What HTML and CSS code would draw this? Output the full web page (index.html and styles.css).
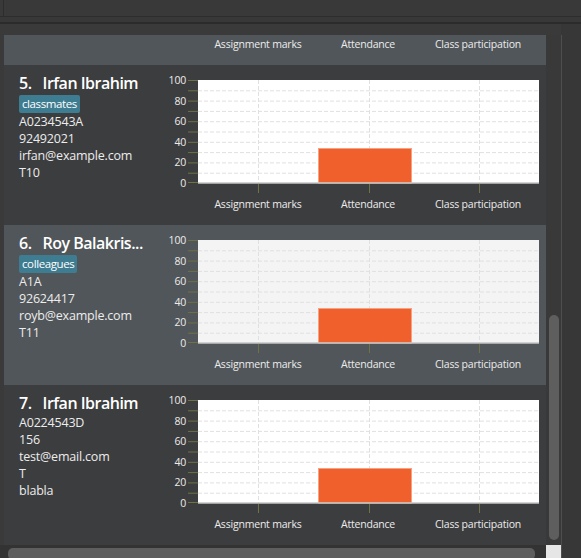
FILE: index.html
```html
<!DOCTYPE html>
<html>
<head>
<meta charset="utf-8">
<link rel="stylesheet" href="styles.css">
</head>
<body>
<div class="topbar"><div class="field"></div></div>
<div class="divider"></div>
<div class="main">
  <div class="listpane">
    <div class="viewport-row">
      <div class="viewport">
        <div class="card alt partial">
          <div class="xlabels"><span>Assignment marks</span><span>Attendance</span><span>Class participation</span></div>
        </div>

        <div class="card">
          <div class="info">
            <div class="name"><span class="idx">5.</span><span class="nm">Irfan Ibrahim</span></div>
            <span class="tag">classmates</span>
            <div class="details">
              <div>A0234543A</div><div>92492021</div><div>irfan@example.com</div><div>T10</div>
            </div>
          </div>
          <div class="chart">
            <div class="yaxis"><span>100</span><span>80</span><span>60</span><span>40</span><span>20</span><span>0</span></div>
            <svg class="plot" width="351" height="113" viewBox="0 0 351 113">
              <rect class="plotbg" x="10" y="0" width="341" height="103"/>
              <g class="grid">
                <line x1="10" x2="351" y1="10.8" y2="10.8"/><line x1="10" x2="351" y1="21.1" y2="21.1"/><line x1="10" x2="351" y1="31.4" y2="31.4"/><line x1="10" x2="351" y1="41.7" y2="41.7"/><line x1="10" x2="351" y1="52" y2="52"/><line x1="10" x2="351" y1="62.3" y2="62.3"/><line x1="10" x2="351" y1="72.6" y2="72.6"/><line x1="10" x2="351" y1="82.9" y2="82.9"/><line x1="10" x2="351" y1="93.2" y2="93.2"/>
                <line x1="70.5" x2="70.5" y1="0" y2="103"/><line x1="181.5" x2="181.5" y1="0" y2="103"/><line x1="291.5" x2="291.5" y1="0" y2="103"/>
              </g>
              <rect class="bar" x="130.5" y="68.5" width="93" height="34.5"/>
              <line class="axis" x1="10" x2="351" y1="103" y2="103"/>
              <g class="ticks">
                <line x1="0" x2="10" y1="0.5" y2="0.5"/><line x1="0" x2="10" y1="10.8" y2="10.8"/><line x1="0" x2="10" y1="21.1" y2="21.1"/><line x1="0" x2="10" y1="31.4" y2="31.4"/><line x1="0" x2="10" y1="41.7" y2="41.7"/><line x1="0" x2="10" y1="52" y2="52"/><line x1="0" x2="10" y1="62.3" y2="62.3"/><line x1="0" x2="10" y1="72.6" y2="72.6"/><line x1="0" x2="10" y1="82.9" y2="82.9"/><line x1="0" x2="10" y1="93.2" y2="93.2"/><line x1="0" x2="10" y1="102.5" y2="102.5"/>
                <line x1="70.5" x2="70.5" y1="104" y2="113"/><line x1="181.5" x2="181.5" y1="104" y2="113"/><line x1="291.5" x2="291.5" y1="104" y2="113"/>
              </g>
            </svg>
            <div class="xlabels"><span>Assignment marks</span><span>Attendance</span><span>Class participation</span></div>
          </div>
        </div>

        <div class="card alt">
          <div class="info">
            <div class="name"><span class="idx">6.</span><span class="nm">Roy Balakris...</span></div>
            <span class="tag">colleagues</span>
            <div class="details">
              <div>A1A</div><div>92624417</div><div>royb@example.com</div><div>T11</div>
            </div>
          </div>
          <div class="chart">
            <div class="yaxis"><span>100</span><span>80</span><span>60</span><span>40</span><span>20</span><span>0</span></div>
            <svg class="plot" width="351" height="113" viewBox="0 0 351 113">
              <rect class="plotbg" x="10" y="0" width="341" height="103"/>
              <g class="grid">
                <line x1="10" x2="351" y1="10.8" y2="10.8"/><line x1="10" x2="351" y1="21.1" y2="21.1"/><line x1="10" x2="351" y1="31.4" y2="31.4"/><line x1="10" x2="351" y1="41.7" y2="41.7"/><line x1="10" x2="351" y1="52" y2="52"/><line x1="10" x2="351" y1="62.3" y2="62.3"/><line x1="10" x2="351" y1="72.6" y2="72.6"/><line x1="10" x2="351" y1="82.9" y2="82.9"/><line x1="10" x2="351" y1="93.2" y2="93.2"/>
                <line x1="70.5" x2="70.5" y1="0" y2="103"/><line x1="181.5" x2="181.5" y1="0" y2="103"/><line x1="291.5" x2="291.5" y1="0" y2="103"/>
              </g>
              <rect class="bar" x="130.5" y="68.5" width="93" height="34.5"/>
              <line class="axis" x1="10" x2="351" y1="103" y2="103"/>
              <g class="ticks">
                <line x1="0" x2="10" y1="0.5" y2="0.5"/><line x1="0" x2="10" y1="10.8" y2="10.8"/><line x1="0" x2="10" y1="21.1" y2="21.1"/><line x1="0" x2="10" y1="31.4" y2="31.4"/><line x1="0" x2="10" y1="41.7" y2="41.7"/><line x1="0" x2="10" y1="52" y2="52"/><line x1="0" x2="10" y1="62.3" y2="62.3"/><line x1="0" x2="10" y1="72.6" y2="72.6"/><line x1="0" x2="10" y1="82.9" y2="82.9"/><line x1="0" x2="10" y1="93.2" y2="93.2"/><line x1="0" x2="10" y1="102.5" y2="102.5"/>
                <line x1="70.5" x2="70.5" y1="104" y2="113"/><line x1="181.5" x2="181.5" y1="104" y2="113"/><line x1="291.5" x2="291.5" y1="104" y2="113"/>
              </g>
            </svg>
            <div class="xlabels"><span>Assignment marks</span><span>Attendance</span><span>Class participation</span></div>
          </div>
        </div>

        <div class="card">
          <div class="info">
            <div class="name"><span class="idx">7.</span><span class="nm">Irfan Ibrahim</span></div>
            <div class="details">
              <div>A0224543D</div><div>156</div><div>test@email.com</div><div>T</div><div>blabla</div>
            </div>
          </div>
          <div class="chart">
            <div class="yaxis"><span>100</span><span>80</span><span>60</span><span>40</span><span>20</span><span>0</span></div>
            <svg class="plot" width="351" height="113" viewBox="0 0 351 113">
              <rect class="plotbg" x="10" y="0" width="341" height="103"/>
              <g class="grid">
                <line x1="10" x2="351" y1="10.8" y2="10.8"/><line x1="10" x2="351" y1="21.1" y2="21.1"/><line x1="10" x2="351" y1="31.4" y2="31.4"/><line x1="10" x2="351" y1="41.7" y2="41.7"/><line x1="10" x2="351" y1="52" y2="52"/><line x1="10" x2="351" y1="62.3" y2="62.3"/><line x1="10" x2="351" y1="72.6" y2="72.6"/><line x1="10" x2="351" y1="82.9" y2="82.9"/><line x1="10" x2="351" y1="93.2" y2="93.2"/>
                <line x1="70.5" x2="70.5" y1="0" y2="103"/><line x1="181.5" x2="181.5" y1="0" y2="103"/><line x1="291.5" x2="291.5" y1="0" y2="103"/>
              </g>
              <rect class="bar" x="130.5" y="68.5" width="93" height="34.5"/>
              <line class="axis" x1="10" x2="351" y1="103" y2="103"/>
              <g class="ticks">
                <line x1="0" x2="10" y1="0.5" y2="0.5"/><line x1="0" x2="10" y1="10.8" y2="10.8"/><line x1="0" x2="10" y1="21.1" y2="21.1"/><line x1="0" x2="10" y1="31.4" y2="31.4"/><line x1="0" x2="10" y1="41.7" y2="41.7"/><line x1="0" x2="10" y1="52" y2="52"/><line x1="0" x2="10" y1="62.3" y2="62.3"/><line x1="0" x2="10" y1="72.6" y2="72.6"/><line x1="0" x2="10" y1="82.9" y2="82.9"/><line x1="0" x2="10" y1="93.2" y2="93.2"/><line x1="0" x2="10" y1="102.5" y2="102.5"/>
                <line x1="70.5" x2="70.5" y1="104" y2="113"/><line x1="181.5" x2="181.5" y1="104" y2="113"/><line x1="291.5" x2="291.5" y1="104" y2="113"/>
              </g>
            </svg>
            <div class="xlabels"><span>Assignment marks</span><span>Attendance</span><span>Class participation</span></div>
          </div>
        </div>
      </div>
      <div class="vscroll"><div class="vthumb"></div></div>
    </div>
    <div class="hbar">
      <div class="htrack"><div class="hthumb"></div></div>
      <div class="corner"></div>
    </div>
  </div>
  <div class="side"><div class="sideline"></div></div>
</div>
</body>
</html>
```

FILE: styles.css
```css
html, body {
  margin: 0;
  padding: 0;
}
body {
  width: 581px;
  height: 558px;
  overflow: hidden;
  background: #3a3a3a;
  font-family: "Open Sans", "Noto Sans", sans-serif;
  color: #ececec;
}
.topbar {
  height: 16px;
  padding-left: 3px;
  background: #393939;
  border-bottom: 1px solid #2d2d2d;
}
.field {
  height: 16px;
  border-left: 1px solid #2d2d2d;
}
.divider {
  height: 5px;
  background: #383838;
  border-bottom: 2px solid #2b2b2b;
}
.main {
  display: flex;
  height: 534px;
}
.listpane {
  width: 561px;
  box-sizing: border-box;
  padding: 11px 0 0 4px;
  background: #3a3a3a;
  display: flex;
  flex-direction: column;
}
.viewport-row {
  display: flex;
  height: 510px;
}
.viewport {
  width: 542px;
  overflow: hidden;
}
.vscroll {
  width: 15px;
  background: #393939;
}
.vthumb {
  margin: 280px 0 0 3px;
  width: 10px;
  height: 225px;
  border-radius: 5px;
  background: #5e5e5e;
}
.hbar {
  display: flex;
  height: 13px;
  margin-left: -4px;
  background: #333333;
}
.htrack {
  flex: 1;
  padding: 3px 0 0 8px;
}
.hthumb {
  width: 527px;
  height: 12px;
  border-radius: 5px;
  background: #5e5e5e;
}
.corner {
  width: 15px;
  background: #e6e6e6;
}
.side {
  flex: 1;
  padding-top: 11px;
  background: #373737;
}
.sideline {
  height: 100%;
  border-left: 1px solid #4e4e4e;
}

.card {
  height: 160px;
  box-sizing: border-box;
  display: flex;
  background: #3c3d3f;
}
.card.alt {
  background: #51565a;
}
.card.partial {
  display: block;
  height: 30px;
  padding: 2px 0 0 184px;
}
.info {
  width: 146px;
  padding: 8px 0 0 15px;
}
.name {
  display: flex;
  gap: 11px;
  font-weight: 600;
  font-size: 16px;
  line-height: 21px;
  letter-spacing: -0.5px;
  color: #ffffff;
  white-space: nowrap;
}
.tag {
  display: block;
  width: fit-content;
  margin-top: 1px;
  height: 18px;
  padding: 0 3px;
  border-radius: 2px;
  background: #3e7c91;
  color: #ffffff;
  font-size: 11.5px;
  line-height: 18px;
  letter-spacing: -0.4px;
}
.details {
  font-size: 12.5px;
  line-height: 17px;
  letter-spacing: -0.2px;
  color: #ececec;
}
.chart {
  padding-top: 15px;
  display: grid;
  grid-template-columns: 21px 351px;
  column-gap: 2px;
  align-content: start;
}
.yaxis {
  display: flex;
  flex-direction: column;
  justify-content: space-between;
  height: 103px;
  font-size: 10.5px;
  letter-spacing: -0.2px;
  color: #ececec;
}
.yaxis span {
  display: block;
  height: 0;
  line-height: 0;
  text-align: right;
}
.plot {
  display: block;
}
.plotbg {
  fill: #ffffff;
}
.alt .plotbg {
  fill: #f4f4f4;
}
.grid line {
  stroke: #e0e0e0;
  stroke-width: 1;
  stroke-dasharray: 4 2;
}
.bar {
  fill: #ef602d;
  stroke: #f5a282;
  stroke-width: 1;
}
.axis {
  stroke: #c6c6c6;
  stroke-width: 1.5;
}
.ticks line {
  stroke: #6f7146;
  stroke-width: 1;
}
.xlabels {
  grid-column: 2;
  margin-top: 4px;
  display: grid;
  grid-template-columns: repeat(3, 110px);
  padding-left: 15px;
  font-size: 10.5px;
  line-height: 14px;
  letter-spacing: -0.2px;
  text-align: center;
  color: #ececec;
  white-space: nowrap;
}
.partial .xlabels {
  margin-top: 0;
}
```
